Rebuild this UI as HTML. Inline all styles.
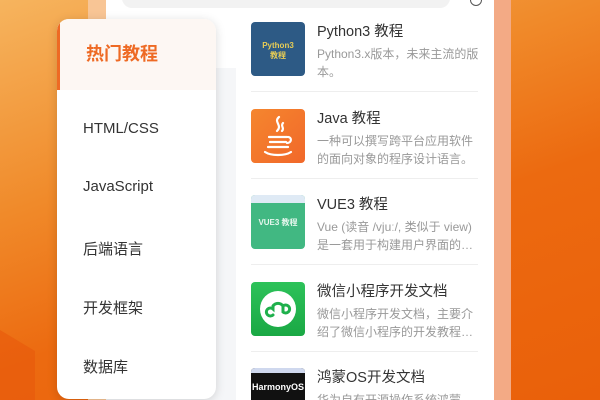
<!DOCTYPE html>
<html><head><meta charset="utf-8"><style>
*{margin:0;padding:0;box-sizing:border-box}
html,body{width:600px;height:400px;overflow:hidden}
#w{position:relative;width:600px;height:400px;overflow:hidden;font-family:"Liberation Sans","Noto Sans CJK SC",sans-serif;
background:linear-gradient(160deg,#f6b45e 0%,#f08a2a 35%,#ec6a10 60%,#ea600a 100%)}
.bl{position:absolute;left:0;top:330px;width:35px;height:70px;background:#e8590c;clip-path:polygon(0 0,100% 30%,100% 100%,0 100%);opacity:.6}
.strip{position:absolute;left:88px;top:0;width:18px;height:400px;background:#f8c595}
.rstrip{position:absolute;left:494px;top:0;width:17px;height:400px;background:#f3aa85}
.phone{position:absolute;left:106px;top:0;width:388px;height:400px;background:#fff}
.side{position:absolute;left:106px;top:68px;width:130px;height:332px;background:#f5f6f8}
.search{position:absolute;left:122px;top:-12px;width:328px;height:20px;border-radius:10px;background:#f2f2f2}
.card{position:absolute;left:57px;top:19px;width:159px;height:380px;background:#fff;border-radius:12px;box-shadow:0 2px 10px rgba(0,0,0,.15);overflow:hidden}
.act{height:71px;background:#fdf7f3;border-left:3px solid #ee6a24;color:#ee6a24;font-weight:bold;font-size:18px;line-height:71px;padding-left:26px}
.it{position:absolute;left:26px;font-size:15px;color:#333}
.li{position:absolute;left:251px;width:227px}
.ic{position:absolute;left:0;top:0;width:54px;height:54px;border-radius:4px;overflow:hidden}
.t{position:absolute;left:66px;top:-2px;font-size:14.5px;color:#333;white-space:nowrap}
.d{position:absolute;left:66px;top:23px;width:166px;font-size:12px;line-height:18px;color:#999}
.n{white-space:nowrap;overflow:hidden;text-overflow:ellipsis;width:162px}
.sep{position:absolute;left:251px;width:227px;height:1px;background:#eee}
</style></head><body><div id="w">
<div class="bl"></div>
<div class="strip"></div><div class="rstrip"></div>
<div class="phone"></div><div class="side"></div>
<div class="search"></div>
<div style="position:absolute;left:470px;top:-6px;width:12px;height:12px;border:1.5px solid #555;border-radius:50%"></div>
<div class="card">
<div class="act">热门教程</div>
<div class="it" style="top:101px">HTML/CSS</div>
<div class="it" style="top:159px">JavaScript</div>
<div class="it" style="top:219px">后端语言</div>
<div class="it" style="top:278px">开发框架</div>
<div class="it" style="top:337px">数据库</div>
</div>

<div class="li" style="top:22px"><div class="ic" style="background:#2d5a85;color:#e7cc55;font-size:8px;font-weight:bold;text-align:center;padding-top:19px;line-height:10px">Python3<br>教程</div>
<div class="t">Python3 教程</div><div class="d">Python3.x版本，未来主流的版本。</div></div>
<div class="sep" style="top:91px"></div>

<div class="li" style="top:109px"><div class="ic" style="background:linear-gradient(135deg,#f5862e,#f1682a)">
<svg width="54" height="54" viewBox="0 0 54 54" fill="none" stroke="#fff" stroke-width="2.2" stroke-linecap="round"><path d="M28 8c-6 5 4 8-2 14M32 14c-3 3 2 5-1 8"/><path d="M18 28h18M19 33h16M17 38h20M14 43c6 4 20 4 26 0M37 28c4 0 4 6-1 6"/></svg></div>
<div class="t">Java 教程</div><div class="d">一种可以撰写跨平台应用软件的面向对象的程序设计语言。</div></div>
<div class="sep" style="top:178px"></div>

<div class="li" style="top:195px"><div class="ic" style="background:#41b882"><div style="height:8px;background:#dfeaf5"></div><div style="color:#e6f7ee;font-size:8px;font-weight:bold;text-align:center;margin-top:14px">VUE3 教程</div></div>
<div class="t">VUE3 教程</div><div class="d n">Vue (读音 /vjuː/, 类似于 view)</div><div class="d n" style="top:41px">是一套用于构建用户界面的渐进式框架</div></div>
<div class="sep" style="top:264px"></div>

<div class="li" style="top:282px"><div class="ic" style="background:linear-gradient(#2dc25a,#1aa844)"><div style="position:absolute;left:9px;top:9px;width:36px;height:36px;border-radius:50%;background:#fff"></div>
<svg style="position:absolute;left:0;top:0" width="54" height="54" viewBox="0 0 54 54" fill="none" stroke="#1fb04c" stroke-width="3" stroke-linecap="round"><path d="M22 33a4 4 0 1 1 0-6v-3a6 6 0 0 1 10 0v6a4 4 0 1 0 0-6"/></svg></div>
<div class="t">微信小程序开发文档</div><div class="d n">微信小程序开发文档，主要介</div><div class="d n" style="top:41px">绍了微信小程序的开发教程，包括</div></div>
<div class="sep" style="top:351px"></div>

<div class="li" style="top:368px;height:32px;overflow:hidden"><div class="ic" style="background:#111"><div style="height:5px;background:#cfd8ee"></div><div style="color:#fff;font-size:9px;font-weight:bold;text-align:center;margin-top:9px">HarmonyOS</div></div>
<div class="t">鸿蒙OS开发文档</div><div class="d">华为自有开源操作系统鸿蒙</div></div>
</div></body></html>
